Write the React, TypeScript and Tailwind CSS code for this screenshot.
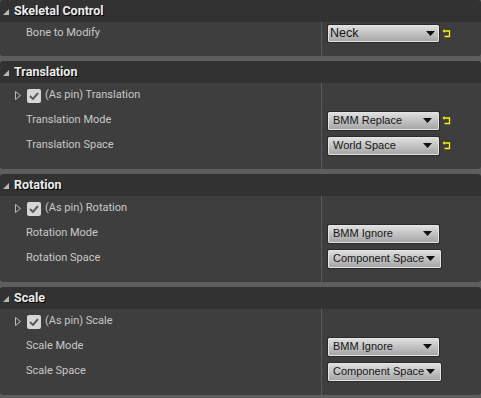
type Row =
  | { kind: "pin"; label: string }
  | { kind: "field"; label: string; value: string; reset?: boolean; wide?: boolean };

const groups: { title: string; rows: Row[] }[] = [
  {
    title: "Translation",
    rows: [
      { kind: "pin", label: "(As pin) Translation" },
      { kind: "field", label: "Translation Mode", value: "BMM Replace", reset: true },
      { kind: "field", label: "Translation Space", value: "World Space", reset: true },
    ],
  },
  {
    title: "Rotation",
    rows: [
      { kind: "pin", label: "(As pin) Rotation" },
      { kind: "field", label: "Rotation Mode", value: "BMM Ignore" },
      { kind: "field", label: "Rotation Space", value: "Component Space", wide: true },
    ],
  },
  {
    title: "Scale",
    rows: [
      { kind: "pin", label: "(As pin) Scale" },
      { kind: "field", label: "Scale Mode", value: "BMM Ignore" },
      { kind: "field", label: "Scale Space", value: "Component Space", wide: true },
    ],
  },
];

export default function App() {
  return (
    <div className="w-[481px] h-[398px] overflow-hidden bg-[#5e5e5e] flex flex-col gap-[5px] font-[Roboto,sans-serif]">
      {/* Skeletal Control */}
      <section className="rounded-[3px] overflow-hidden">
        <Header title="Skeletal Control" />
        <div className="h-[34px] flex bg-[#3e3e3e]">
          <div className="w-[321px] h-[22px] flex items-center pl-[26px] text-[11px] text-[#c8c8c8]">Bone to Modify</div>
          <div className="w-px bg-[#5a5a5a]" />
          <div className="flex-1 h-[22px] flex items-center pl-[6px] pt-px">
            <Dropdown value="Neck" big />
            <ResetIcon />
          </div>
        </div>
      </section>

      {groups.map((g) => (
        <section key={g.title} className="rounded-[3px] overflow-hidden">
          <Header title={g.title} />
          <div className="h-[86px] flex bg-[#3e3e3e]">
            <div className="w-[321px] flex flex-col">
              {g.rows.map((r) => (
                <div key={r.label} className="h-[25px] flex items-center text-[11px] text-[#c8c8c8]">
                  {r.kind === "pin" ? (
                    <>
                      <svg width="6" height="9" viewBox="0 0 6 9" className="ml-[15px] mr-[6px]">
                        <path d="M0.5 0.5 L5.5 4.5 L0.5 8.5 Z" fill="none" stroke="#bdbdbd" strokeWidth="1" />
                      </svg>
                      <Checkbox />
                      <span className="ml-[4px]">{r.label}</span>
                    </>
                  ) : (
                    <span className="pl-[26px]">{r.label}</span>
                  )}
                </div>
              ))}
            </div>
            <div className="w-px bg-[#5a5a5a]" />
            <div className="flex-1 flex flex-col">
              {g.rows.map((r) => (
                <div key={r.label} className="h-[25px] flex items-center pl-[6px]">
                  {r.kind === "field" && (
                    <>
                      <Dropdown value={r.value} wide={r.wide} />
                      {r.reset && <ResetIcon />}
                    </>
                  )}
                </div>
              ))}
            </div>
          </div>
        </section>
      ))}
    </div>
  );
}

function Header({ title }: { title: string }) {
  return (
    <div className="h-[22px] bg-[#323232] flex items-center">
      <svg width="6" height="6" viewBox="0 0 6 6" className="ml-[3px] mr-[5px] mt-[1px]">
        <path d="M6 0 L6 6 L0 6 Z" fill="#b8b8b8" />
      </svg>
      <span className="text-[12.5px] font-bold text-[#ececec] [text-shadow:1px_1px_0_#000]">{title}</span>
    </div>
  );
}

function Checkbox() {
  return (
    <div className="w-[14px] h-[14px] rounded-[2px] bg-[#d6d6d6] flex items-center justify-center">
      <svg width="10" height="8" viewBox="0 0 10 8">
        <path d="M1 4 L4 7 L9 1" fill="none" stroke="#5c5c5c" strokeWidth="2" />
      </svg>
    </div>
  );
}

function Dropdown({ value, wide, big }: { value: string; wide?: boolean; big?: boolean }) {
  return (
    <div
      className={`${wide ? "w-[113px]" : "w-[111px]"} ${big ? "h-[17px]" : "h-[18px]"} flex items-center border border-[#e4e4e4] rounded-[1px] bg-gradient-to-b from-[#dedede] to-[#a6a6a6] shadow-[0_0_0_1px_#2a2a2a] font-['Liberation_Sans',Arial,sans-serif] text-[#151515]`}
    >
      <span className={`flex-1 whitespace-nowrap ${big ? "text-[12.5px] pl-px" : "text-[11px] pl-[4px]"}`}>{value}</span>
      <svg width="9" height="5" viewBox="0 0 9 5" className={wide ? "mr-[5px]" : big ? "mr-[3px]" : "mr-[6px]"}>
        <path d="M0 0 L9 0 L4.5 5 Z" fill="#111" />
      </svg>
    </div>
  );
}

function ResetIcon() {
  return (
    <svg width="9" height="9" viewBox="0 0 9 9" className="ml-[3px]">
      <path d="M2 2 H7.5 V7.5 H2.5" fill="none" stroke="#f5f500" strokeWidth="1.3" />
      <path d="M0.5 2 L2.5 0 L2.5 4 Z" fill="#f5f500" />
    </svg>
  );
}
